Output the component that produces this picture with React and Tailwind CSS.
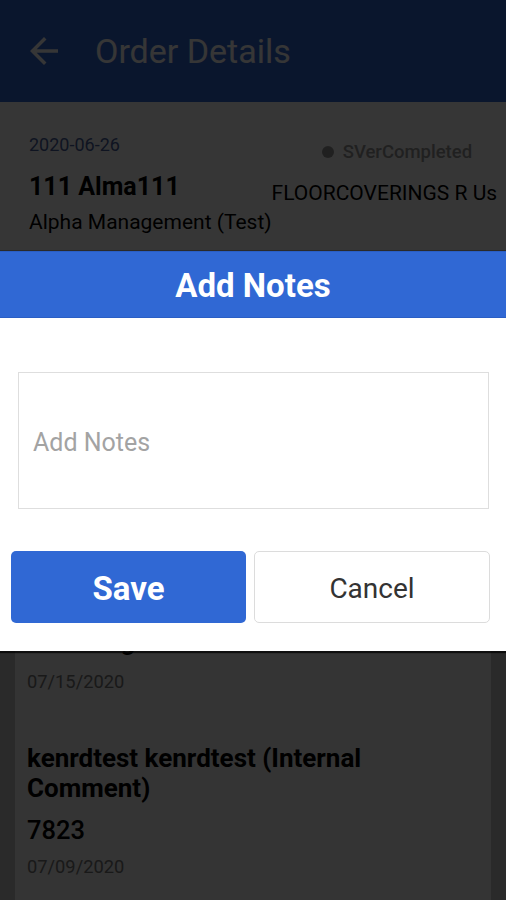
import React from 'react';

function ArrowBack() {
  return (
    <svg viewBox="0 0 24 24" className="w-[42px] h-[42px] fill-white">
      <path d="M20 11H7.83l5.59-5.59L12 4l-8 8 8 8 1.41-1.41L7.83 13H20v-2z" />
    </svg>
  );
}

function NoteItem({ title, value, date, className, dateClass = 'mt-3' }) {
  return (
    <div className={className}>
      <div className="pr-[60px] text-[26px] leading-[30px] font-bold text-black">{title}</div>
      {value && <div className="mt-3 text-[25.5px] leading-[30px] font-medium text-black">{value}</div>}
      <div className={`${dateClass} text-[18.3px] leading-[20px] text-[#777]`}>{date}</div>
    </div>
  );
}

export default function App() {
  return (
    <div className="relative h-[900px] w-full overflow-hidden flex flex-col bg-[#c8c8c8] font-['Roboto',sans-serif]">
      {/* Toolbar */}
      <div className="h-[102px] shrink-0 flex items-center pl-[23px] bg-[#3367d6]">
        <ArrowBack />
        <span className="ml-[30px] text-[34px] text-white">Order Details</span>
      </div>

      {/* Order summary */}
      <div className="h-[148px] shrink-0 flex bg-white">
        <div className="pl-[29px] pt-[31px] flex flex-col">
          <div className="text-[18px] leading-[24px] text-[#4a5f9c]">2020-06-26</div>
          <div className="mt-[15px] text-[25px] leading-[30px] font-bold text-black">111 Alma111</div>
          <div className="mt-[7px] text-[21px] leading-[26px] text-black whitespace-nowrap">Alpha Management (Test)</div>
        </div>
        <div className="ml-auto pr-[9px] pt-[38px] flex flex-col items-end">
          <div className="mr-[25px] flex items-center gap-[9px] text-[18.5px] leading-[24px] font-medium text-[#999]">
            <span className="w-[12px] h-[12px] rounded-full bg-[#999]"></span>
            SVerCompleted
          </div>
          <div className="mt-[16px] text-[21px] leading-[26px] text-black whitespace-nowrap">FLOORCOVERINGS R Us</div>
        </div>
      </div>

      {/* Notes list */}
      <div className="flex-1 pt-3">
        <div className="ml-[15px] mr-[15px] h-full bg-[#f3f3f3] border-r border-[#f6f6f6] px-3 pt-[364px]">
          <NoteItem title="Test msg" date="07/15/2020" dateClass="mt-[16px]" />
          <NoteItem
            className="mt-[51px]"
            title="kenrdtest kenrdtest (Internal Comment)"
            value="7823"
            date="07/09/2020"
          />
        </div>
      </div>

      {/* Dim overlay */}
      <div className="absolute inset-0 bg-black/[0.79]"></div>

      {/* Add Notes dialog */}
      <div className="absolute inset-x-0 top-[251px] bg-white shadow-[0_2px_1px_rgba(0,0,0,0.7)]">
        <div className="h-[67px] pt-[3px] flex items-center justify-center bg-[#3068d4] border-t border-b border-[#2a5ec4] text-white text-[33px] font-bold">
          Add Notes
        </div>
        <div className="px-[18px] pt-[54px]">
          <input
            placeholder="Add Notes"
            className="w-[471px] h-[137px] border border-[#dedede] pl-[14px] pt-[3px] text-[25px] text-[#333] placeholder:text-[#a3a3a3] outline-none"
          />
        </div>
        <div className="flex gap-2 pl-[11px] pr-[16px] pt-[42px] pb-[28px]">
          <button className="w-[235px] h-[72px] pt-[3px] rounded-[5px] bg-[#3068d4] text-white text-[33px] font-bold">Save</button>
          <button className="w-[236px] h-[72px] pt-[3px] rounded-[5px] border border-[#dcdcdc] bg-white text-[#333] text-[28px]">Cancel</button>
        </div>
      </div>
    </div>
  );
}
